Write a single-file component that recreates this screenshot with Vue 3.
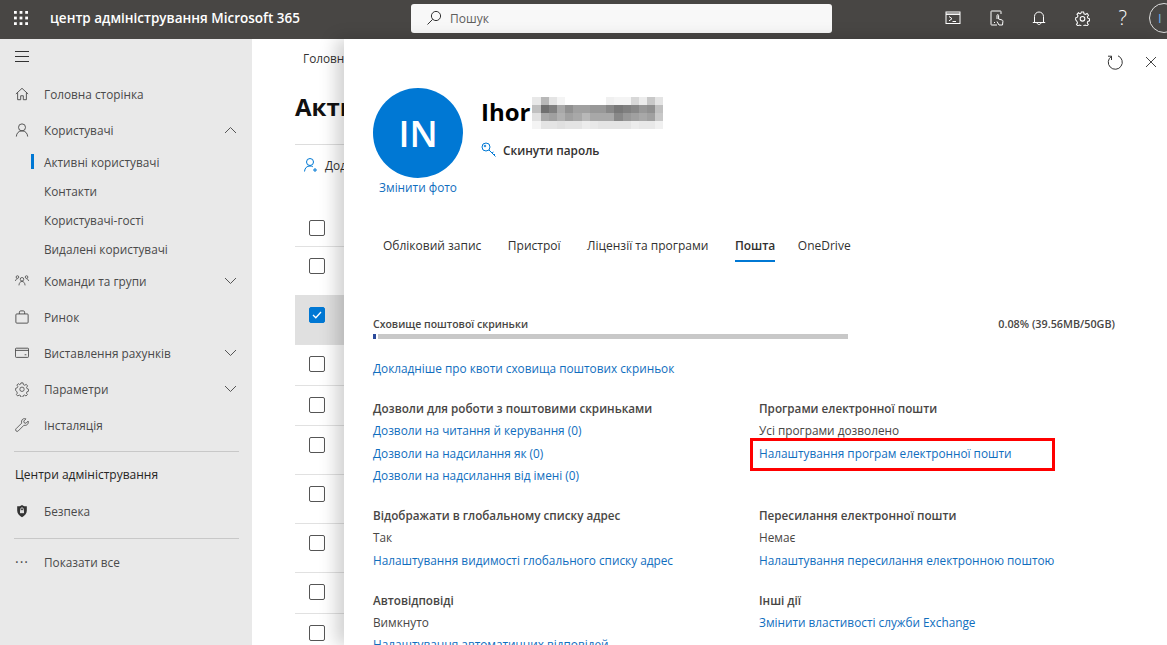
<script setup>
const navTop = [
  { label: 'Головна сторінка', icon: 'home' },
  { label: 'Користувачі', icon: 'user', open: true }
]
const subItems = ['Активні користувачі', 'Контакти', 'Користувачі-гості', 'Видалені користувачі']
const navRest = [
  { label: 'Команди та групи', icon: 'team', chevron: true },
  { label: 'Ринок', icon: 'bag' },
  { label: 'Виставлення рахунків', icon: 'card', chevron: true },
  { label: 'Параметри', icon: 'gear', chevron: true },
  { label: 'Інсталяція', icon: 'wrench' }
]
const tableRows = [
  { h: 49 }, { h: 49, selected: true }, { h: 41 }, { h: 40 }, { h: 49 }, { h: 49 }, { h: 49 }, { h: 41 }, { h: 40 }
]
const tabs = ['Обліковий запис', 'Пристрої', 'Ліцензії та програми', 'Пошта', 'OneDrive']

// пікселі розмитого прізвища
const blur = [
  [232, 184, 228, 244, 255, 255, 255, 255, 255, 240, 244, 244, 216, 236, 200, 228],
  [192, 112, 128, 168, 144, 160, 160, 152, 152, 136, 120, 128, 136, 152, 144, 192],
  [224, 168, 160, 176, 160, 168, 184, 168, 168, 168, 136, 152, 160, 168, 160, 200],
  [244, 228, 228, 224, 228, 228, 236, 232, 228, 228, 228, 228, 236, 232, 232, 240]
]
function gray(v) {
  return `rgb(${v},${v},${v})`
}
</script>

<template>
  <div class="page">
    <header class="topbar">
      <div class="top-left">
        <svg class="waffle" width="14" height="14" viewBox="0 0 14 14">
          <g fill="#fff">
            <rect x="0" y="0" width="2.800" height="2.800" /><rect x="5.600" y="0" width="2.800" height="2.800" /><rect x="11.200" y="0" width="2.800" height="2.800" />
            <rect x="0" y="5.600" width="2.800" height="2.800" /><rect x="5.600" y="5.600" width="2.800" height="2.800" /><rect x="11.200" y="5.600" width="2.800" height="2.800" />
            <rect x="0" y="11.200" width="2.800" height="2.800" /><rect x="5.600" y="11.200" width="2.800" height="2.800" /><rect x="11.200" y="11.200" width="2.800" height="2.800" />
          </g>
        </svg>
        <span class="app-title">центр адміністрування Microsoft 365</span>
      </div>
      <div class="search">
        <svg width="16" height="16" viewBox="0 0 16 16" fill="none" stroke="#333" stroke-width="1">
          <circle cx="10" cy="6" r="4.600" /><path d="M6.700 9.300 1.500 14.500" />
        </svg>
        <span>Пошук</span>
      </div>
      <div class="top-icons">
        <svg width="16" height="14" viewBox="0 0 16 14" fill="none" stroke="#fff"><rect x="1" y="1" width="14" height="11.500" /><path d="M1 3.200h14" stroke-width="1.500" /><path d="m4 5.500 3 2.200-3 2.200M7.500 10.500h3.500" /></svg>
        <svg width="14" height="16" viewBox="0 0 14 16" fill="none" stroke="#fff"><path d="M7 15H1.500a.5.500 0 0 1-.5-.5V1.500a.5.500 0 0 1 .5-.5h9a.5.500 0 0 1 .5.500V4" /><path d="M7 9V5.500c0-1.200 1.600-1.200 1.600 0V9l3.400 1c.8.300 1 .9.900 1.500L12.500 15H9L7 11.500" /><path d="M4 12.500h1" /></svg>
        <svg width="14" height="16" viewBox="0 0 14 16" fill="none" stroke="#fff"><path d="M2.500 12V6.500a4.500 4.500 0 0 1 9 0V12" /><path d="M.8 12.500h12.400" /><path d="M5.200 13c0 2 3.600 2 3.600 0" /></svg>
        <svg width="15" height="15" viewBox="0 0 16 16" fill="none" stroke="#fff" stroke-width="1.100"><path d="M6.800 1h2.400l.4 2 1.500.7 1.800-1 1.500 1.800-1.200 1.600.5 1.500 1.800.700v2.200l-1.900.7-.5 1.500 1.100 1.700-1.600 1.600-1.700-1.100-1.500.6-.4 1.900H6.700l-.4-1.900-1.500-.6-1.700 1.100-1.500-1.700 1.100-1.600-.6-1.500L.7 9.500V7.300l1.900-.7.600-1.500L2.100 3.500l1.600-1.600 1.700 1.100 1-.6z" /><circle cx="8" cy="8.300" r="2.500" /></svg>
        <span class="help">?</span>
      </div>
      <div class="me"><span>I</span></div>
    </header>

    <div class="body">
      <nav class="sidebar">
        <button class="burger" aria-label="меню"><span></span><span></span><span></span></button>

        <div v-for="item in navTop" :key="item.label" class="nav-item">
          <svg v-if="item.icon === 'home'" class="nav-icon" width="16" height="16" viewBox="0 0 16 16" fill="none" stroke="#444"><path d="M1 8 8 1.500 15 8M3 6.500V14.500h3.500V10h3v4.500H13V6.500" /></svg>
          <svg v-else class="nav-icon" width="16" height="16" viewBox="0 0 16 16" fill="none" stroke="#444"><circle cx="8" cy="5" r="4" /><path d="M1.500 15.500c.3-4 2.700-6.500 6.500-6.500s6.200 2.500 6.500 6.500" /></svg>
          <span class="nav-label">{{ item.label }}</span>
          <svg v-if="item.open" class="chev" width="13" height="8" viewBox="0 0 13 8" fill="none" stroke="#555"><path d="m1 7 5.500-5.500L12 7" /></svg>
        </div>

        <div v-for="(sub, i) in subItems" :key="sub" class="sub-item" :class="{ active: i === 0 }">{{ sub }}</div>

        <div v-for="item in navRest" :key="item.label" class="nav-item">
          <svg v-if="item.icon === 'team'" class="nav-icon" width="16" height="14" viewBox="0 0 16 14" fill="none" stroke="#444" stroke-width=".9"><circle cx="8" cy="5" r="2" /><path d="M4.500 12c.2-2.800 1.500-4.500 3.500-4.500s3.300 1.700 3.500 4.500" /><circle cx="2.800" cy="2.500" r="1.500" /><circle cx="13.200" cy="2.500" r="1.500" /><path d="M.5 7c.2-1.500 1-2.500 2.300-2.500M15.500 7c-.2-1.500-1-2.500-2.300-2.500" /></svg>
          <svg v-else-if="item.icon === 'bag'" class="nav-icon" width="16" height="16" viewBox="0 0 16 16" fill="none" stroke="#444"><rect x="1" y="4.500" width="14" height="10.500" rx="1" /><path d="M5 4.500V2.500c0-.8.500-1.500 1.500-1.500h3c1 0 1.500.7 1.500 1.500v2" /></svg>
          <svg v-else-if="item.icon === 'card'" class="nav-icon" width="16" height="12" viewBox="0 0 16 12" fill="none" stroke="#444"><rect x=".5" y=".5" width="15" height="10.500" rx="1" /><path d="M.5 3h15M11 8h2" /></svg>
          <svg v-else-if="item.icon === 'gear'" class="nav-icon" width="16" height="16" viewBox="0 0 16 16" fill="none" stroke="#444" stroke-width=".9"><path d="M6.800 1h2.400l.4 2 1.500.7 1.800-1 1.500 1.800-1.200 1.600.5 1.500 1.800.700v2.200l-1.900.7-.5 1.500 1.100 1.700-1.600 1.600-1.700-1.100-1.500.6-.4 1.900H6.700l-.4-1.900-1.500-.6-1.700 1.100-1.500-1.700 1.100-1.600-.6-1.500L.7 9.500V7.300l1.900-.7.600-1.500L2.100 3.500l1.600-1.600 1.700 1.100 1-.6z" /><circle cx="8" cy="8.300" r="2.500" /></svg>
          <svg v-else class="nav-icon" width="16" height="16" viewBox="0 0 16 16" fill="none" stroke="#444" stroke-width=".9"><path d="M15 3.500 12.500 6 10.500 5.500 10 3.500 12.500 1C10.500.2 8 1 7.500 3.500c-.2 1 0 1.700.2 2.300L1.200 12.300a1.700 1.700 0 0 0 2.500 2.500l6.500-6.500c3 .8 5.800-1.500 4.800-4.800z" /></svg>
          <span class="nav-label">{{ item.label }}</span>
          <svg v-if="item.chevron" class="chev" width="13" height="8" viewBox="0 0 13 8" fill="none" stroke="#555"><path d="m1 1 5.500 5.500L12 1" /></svg>
        </div>

        <div class="nav-divider first"></div>
        <div class="nav-heading">Центри адміністрування</div>
        <div class="nav-item">
          <svg class="nav-icon" width="16" height="16" viewBox="0 0 16 16"><path d="M8 1c2 1.300 3.500 1.700 5.500 1.700v5C13.500 11 11 13.500 8 15c-3-1.500-5.500-4-5.500-7.300v-5C4.500 2.700 6 2.300 8 1z" fill="#333" /><rect x="5.700" y="7" width="4.600" height="3.500" fill="#ddd" /><path d="M6.500 7V5.800c0-2 3-2 3 0V7" fill="none" stroke="#ddd" /></svg>
          <span class="nav-label">Безпека</span>
        </div>
        <div class="nav-divider second"></div>
        <div class="nav-item">
          <span class="nav-icon dots">···</span>
          <span class="nav-label">Показати все</span>
        </div>
      </nav>

      <main class="main">
        <div class="breadcrumb">Головна сторінка</div>
        <h1 class="page-title">Активні користувачі</h1>
        <div class="commands">
          <svg width="16" height="16" viewBox="0 0 16 16" fill="none" stroke="#0078d4"><circle cx="7" cy="5" r="3.500" /><path d="M1.500 14.500C1.800 10.800 4 9 7 9c1 0 2 .2 2.800.7M12 11v4M10 13h4" /></svg>
          <span>Додати користувача</span>
        </div>
        <div class="table">
          <div class="table-head"><span class="check"></span></div>
          <div v-for="(row, i) in tableRows" :key="i" class="table-row" :class="{ selected: row.selected }" :style="{ height: row.h + 'px' }">
            <span class="check" :class="{ checked: row.selected }">
              <svg v-if="row.selected" width="10" height="8" viewBox="0 0 10 8" fill="none" stroke="#fff" stroke-width="1.300"><path d="m1 4 2.800 2.800L9 1" /></svg>
            </span>
          </div>
        </div>
      </main>

      <section class="panel">
        <div class="panel-actions">
          <svg width="16" height="16" viewBox="0 0 16 16" fill="none" stroke="#333"><path d="M4.600 2.300A7 7 0 1 0 11 1.800" /><path d="M4.500 6V2.200H1" /></svg>
          <svg width="12" height="12" viewBox="0 0 12 12" fill="none" stroke="#444"><path d="m1 1 10 10M11 1 1 11" /></svg>
        </div>

        <div class="profile">
          <div class="avatar-col">
            <div class="avatar">IN</div>
            <a class="link change-photo">Змінити фото</a>
          </div>
          <div class="profile-info">
            <div class="name-row">
              <span class="name">Ihor</span>
              <div class="blur">
                <div v-for="(row, r) in blur" :key="r" class="blur-row">
                  <span v-for="(v, c) in row" :key="c" :style="{ background: gray(v) }"></span>
                </div>
              </div>
            </div>
            <div class="reset">
              <svg width="16" height="16" viewBox="0 0 16 16" fill="none" stroke="#0078d4"><circle cx="5" cy="5" r="4" /><path d="m8 8 6.500 6.500M11 11l1.500-1M13 13l1-1" /><circle cx="4" cy="4" r=".8" /></svg>
              <span>Скинути пароль</span>
            </div>
          </div>
        </div>

        <div class="tabs">
          <div v-for="tab in tabs" :key="tab" class="tab" :class="{ active: tab === 'Пошта' }">{{ tab }}</div>
        </div>

        <div class="storage">
          <div class="storage-head">
            <span class="storage-title">Сховище поштової скриньки</span>
            <span class="storage-value">0.08% (39.56MB/50GB)</span>
          </div>
          <div class="storage-bar"><span class="used"></span><span class="free"></span></div>
          <a class="link quota">Докладніше про квоти сховища поштових скриньок</a>
        </div>

        <div class="columns">
          <div class="block">
            <div class="block-title">Дозволи для роботи з поштовими скриньками</div>
            <a class="link">Дозволи на читання й керування (0)</a>
            <a class="link">Дозволи на надсилання як (0)</a>
            <a class="link">Дозволи на надсилання від імені (0)</a>
          </div>
          <div class="block">
            <div class="block-title">Програми електронної пошти</div>
            <div class="plain">Усі програми дозволено</div>
            <a class="link highlighted">Налаштування програм електронної пошти<span class="red-box"></span></a>
          </div>
          <div class="block">
            <div class="block-title">Відображати в глобальному списку адрес</div>
            <div class="plain">Так</div>
            <a class="link">Налаштування видимості глобального списку адрес</a>
          </div>
          <div class="block">
            <div class="block-title">Пересилання електронної пошти</div>
            <div class="plain">Немає</div>
            <a class="link">Налаштування пересилання електронною поштою</a>
          </div>
          <div class="block">
            <div class="block-title">Автовідповіді</div>
            <div class="plain">Вимкнуто</div>
            <a class="link">Налаштування автоматичних відповідей</a>
          </div>
          <div class="block">
            <div class="block-title">Інші дії</div>
            <a class="link">Змінити властивості служби Exchange</a>
          </div>
        </div>
      </section>
    </div>
  </div>
</template>

<style scoped>
.page {
  width: 1167px;
  height: 645px;
  overflow: hidden;
  display: flex;
  flex-direction: column;
  font-family: "Open Sans", "Noto Sans", sans-serif;
  font-size: 11.800px;
  color: #323130;
  background: #fff;
}

/* верхня панель */
.topbar {
  height: 39px;
  flex: none;
  background: #484644;
  display: flex;
  align-items: center;
  padding-bottom: 3px;
  box-sizing: border-box;
  overflow: hidden;
}

.top-left {
  display: flex;
  align-items: center;
  width: 411px;
  flex: none;
  padding-left: 14px;
  box-sizing: border-box;
}

.app-title {
  margin-left: 22px;
  color: #fff;
  font-size: 13.500px;
  font-weight: 600;
  white-space: nowrap;
}

.search {
  width: 421px;
  height: 29px;
  flex: none;
  background: #f8f8f8;
  border-radius: 3px;
  display: flex;
  align-items: center;
  gap: 8px;
  padding-left: 15px;
  box-sizing: border-box;
  font-size: 12px;
  color: #605e5c;
}

.top-icons {
  flex: none;
  margin-left: 113px;
  width: 182px;
  display: flex;
  align-items: center;
  justify-content: space-between;
}

.help {
  color: #fff;
  font-size: 20px;
  font-weight: 300;
  line-height: 20px;
}

.me {
  flex: none;
  width: 30px;
  height: 30px;
  margin-left: 22px;
  border: 1px solid #ddd;
  border-radius: 50%;
  box-sizing: border-box;
  color: #6db2ea;
  font-size: 13px;
  display: flex;
  align-items: center;
  padding-left: 8px;
}

.body {
  flex: 1;
  display: flex;
  position: relative;
  min-height: 0;
}

/* бічне меню */
.sidebar {
  width: 252px;
  flex: none;
  background: #e9e9e9;
  padding-top: 12px;
  box-sizing: border-box;
}

.burger {
  display: flex;
  flex-direction: column;
  gap: 4px;
  width: 14px;
  margin: 0 0 0 15px;
  padding: 0;
  height: 12px;
  background: none;
  border: 0;
}

.burger span {
  display: block;
  height: 1px;
  flex: none;
  background: #333;
}

.nav-item {
  height: 36px;
  display: flex;
  align-items: center;
  padding: 0 15px;
  color: #4a4a4a;
}

.burger + .nav-item {
  margin-top: 13px;
}

.nav-icon {
  flex: none;
  width: 14px;
}

.dots {
  font-size: 14px;
  line-height: 1;
  letter-spacing: 1px;
}

.nav-label {
  margin-left: 15px;
  white-space: nowrap;
}

.chev {
  margin-left: auto;
}

.sub-item {
  height: 28.750px;
  display: flex;
  align-items: center;
  padding-left: 44px;
  color: #4a4a4a;
  position: relative;
}

.sub-item.active::before {
  content: "";
  position: absolute;
  left: 31px;
  top: 6px;
  width: 3px;
  height: 15px;
  background: #0078d4;
}

.nav-divider {
  height: 1px;
  background: #c8c8c8;
  margin-left: 14px;
  margin-right: 13px;
}

.nav-divider.first {
  margin-top: 8px;
  margin-bottom: 15px;
}

.nav-divider.second {
  margin-top: 9px;
  margin-bottom: 5px;
}

.nav-heading {
  color: #252423;
  font-size: 12px;
  padding-left: 15px;
  height: 16px;
  line-height: 16px;
  margin-bottom: 10px;
}

/* сторінка під панеллю */
.main {
  flex: none;
  width: 92px;
  box-sizing: border-box;
  padding: 11px 0 0 43px;
  overflow: hidden;
  white-space: nowrap;
}

.breadcrumb {
  color: #323130;
  line-height: 16px;
  padding-left: 8px;
}

.page-title {
  margin: 25px 0 0;
  font-size: 24px;
  line-height: 32px;
  font-weight: 700;
  color: #111;
}

.commands {
  display: flex;
  align-items: center;
  gap: 6px;
  margin-top: 21px;
  padding-top: 9px;
  padding-left: 8px;
  border-top: 1px solid #ddd;
  width: 480px;
  height: 22px;
}

.table {
  margin-top: 30px;
  width: 480px;
}

.table-head {
  height: 40px;
  display: flex;
  padding: 14px 0 0 14px;
  box-sizing: border-box;
}

.table-row {
  border-top: 1px solid #e1e1e1;
  box-sizing: border-box;
  padding: 11px 0 0 14px;
}

.table-row.selected {
  background: #e0e0e0;
  border-top-color: #e0e0e0;
}

.check {
  display: flex;
  align-items: center;
  justify-content: center;
  width: 14px;
  height: 14px;
  border: 1px solid #555;
  border-radius: 2px;
  background: #fff;
}

.check.checked {
  background: #0078d4;
  border-color: #0078d4;
}

/* панель користувача */
.panel {
  position: absolute;
  left: 344px;
  right: 0;
  top: 0;
  bottom: 0;
  background: #fff;
  box-shadow: -8px 0 16px rgba(0, 0, 0, 0.18);
  padding: 0 52px 0 29px;
  overflow: hidden;
  box-sizing: border-box;
}

.panel-actions {
  position: absolute;
  top: 15px;
  right: 10px;
  display: flex;
  align-items: center;
  gap: 22px;
}

.profile {
  display: flex;
  padding-top: 49px;
}

.avatar-col {
  width: 90px;
  display: flex;
  flex-direction: column;
  align-items: center;
}

.avatar {
  width: 90px;
  height: 90px;
  border-radius: 50%;
  background: #0078d4;
  color: #fff;
  font-size: 36px;
  font-weight: 600;
  display: flex;
  align-items: center;
  justify-content: center;
}

.change-photo {
  margin-top: -2px;
}

.profile-info {
  margin-left: 18px;
}

.name-row {
  display: flex;
  align-items: center;
  margin-top: 6px;
  height: 34px;
}

.name {
  font-size: 24px;
  font-weight: 700;
  color: #000;
}

.blur {
  margin-left: 2px;
  margin-top: 4px;
}

.blur-row {
  display: flex;
}

.blur-row span {
  width: 8.200px;
  height: 8.200px;
}

.reset {
  display: flex;
  align-items: center;
  gap: 6px;
  margin-top: 14px;
  font-weight: 600;
  color: #323130;
}

.tabs {
  display: flex;
  gap: 26.500px;
  margin-top: 33px;
  padding-left: 10px;
  font-size: 12px;
}

.tab {
  height: 30px;
  line-height: 16px;
  padding-top: 6px;
  box-sizing: border-box;
  color: #323130;
  white-space: nowrap;
}

.tab.active {
  font-weight: 600;
  border-bottom: 2px solid #0078d4;
  margin-right: -4px;
}

.storage {
  margin-top: 54px;
}

.storage-head {
  display: flex;
  justify-content: space-between;
  font-size: 10.500px;
  font-weight: 600;
  line-height: 16px;
  color: #484644;
}

.storage-value {
  font-size: 10.800px;
}

.storage-bar {
  display: flex;
  gap: 2px;
  width: 475px;
  height: 5px;
  margin-top: 2px;
}

.used {
  width: 3px;
  background: #2b4a9b;
}

.free {
  flex: 1;
  background: #c8c8c8;
}

.link {
  display: block;
  color: #106ebe;
  line-height: 22.500px;
  white-space: nowrap;
}

.quota {
  margin-top: 18px;
}

.columns {
  display: grid;
  grid-template-columns: 386px 1fr;
  margin-top: 18px;
}

.block {
  padding-bottom: 17.500px;
}

.block-title {
  font-weight: 600;
  font-size: 11.700px;
  line-height: 22px;
  color: #484644;
}

.plain {
  line-height: 22.500px;
  color: #484644;
}

.highlighted {
  position: relative;
}

.red-box {
  position: absolute;
  left: -9px;
  top: -4px;
  width: 305px;
  height: 33px;
  border: 3px solid #f00;
  box-sizing: border-box;
}
</style>
